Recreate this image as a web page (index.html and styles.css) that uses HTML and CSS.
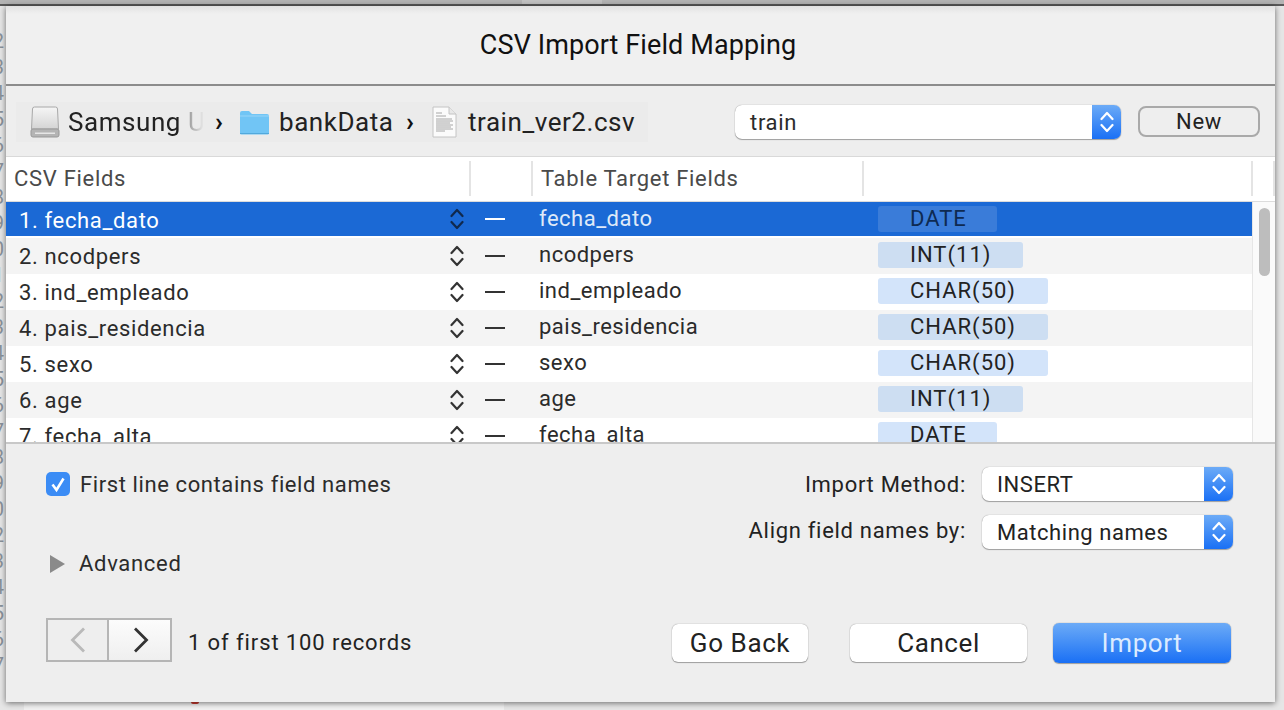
FILE: index.html
```html
<!DOCTYPE html>
<html lang="en">

<head>
    <meta charset="UTF-8">
    <title>CSV Import Field Mapping</title>
    <link rel="stylesheet" href="styles.css">
</head>

<body>
    <svg class="defs" width="0" height="0">
        <symbol id="updown" viewBox="0 0 14 24">
            <path d="M1.5 9 7 3l5.500 6M1.500 15 7 21l5.500-6" fill="none" stroke="currentColor" stroke-width="2.200" stroke-linecap="round" stroke-linejoin="round"/>
        </symbol>
    </svg>

    <div class="backdrop">
        <div class="gutter">
            <span>2</span><span>3</span><span>4</span><span>5</span><span>6</span><span>7</span><span>8</span><span>9</span><span>0</span><span>1</span><span>2</span><span>3</span><span>4</span><span>5</span><span>6</span><span>7</span><span>8</span><span>9</span><span>0</span><span>2</span><span>3</span><span>4</span><span>5</span><span>6</span><span>7</span>
        </div>
        <div class="topbar"><div class="topbar-tab"></div></div>
        <div class="backdrop-bottom"><i class="red-mark"></i></div>
    </div>

    <div class="dialog">
        <h1 class="title">CSV Import Field Mapping</h1>

        <div class="tools">
            <div class="crumbs">
                <svg class="ico-disk" width="30" height="32" viewBox="0 0 30 32">
                    <defs>
                        <linearGradient id="diskTop" x1="0" y1="0" x2="0" y2="1">
                            <stop offset="0" stop-color="#f6f6f6"/>
                            <stop offset="1" stop-color="#d4d4d4"/>
                        </linearGradient>
                    </defs>
                    <path d="M2.500 3a2 2 0 0 1 2-2h21a2 2 0 0 1 2 2l1 20H1.500z" fill="url(#diskTop)" stroke="#a8a8a8"/>
                    <rect x="1" y="23" width="28" height="8" rx="2" fill="#b4b4b4" stroke="#999"/>
                    <rect x="5" y="26.500" width="20" height="1.500" fill="#e6e6e6"/>
                </svg>
                <span class="crumb-disk">Samsung U</span>
                <span class="crumb-sep">›</span>
                <svg class="ico-folder" width="31" height="25" viewBox="0 0 31 25">
                    <path d="M1 3a2 2 0 0 1 2-2h7l3 3h15a2 2 0 0 1 2 2v17a1.500 1.500 0 0 1-1.500 1.500h-26A1.500 1.500 0 0 1 1 23z" fill="#71c5f5"/>
                    <path d="M1 6h29" stroke="#9ad6f8" stroke-width="1"/>
                    <path d="M1 23.500h29" stroke="#52a9dc" stroke-width="1"/>
                </svg>
                <span class="crumb-folder">bankData</span>
                <span class="crumb-sep sep-two">›</span>
                <svg class="ico-file" width="25" height="32" viewBox="0 0 25 32">
                    <path d="M1 1h16l7 7v23H1z" fill="#fbfbfb" stroke="#c4c4c4"/>
                    <path d="M17 1v7h7" fill="#e8e8e8" stroke="#c4c4c4"/>
                    <path d="M4 7h6M4 10h10M4 13h16M4 15h17M4 17h14M4 19h17M4 21h15M4 23h17M4 25h9" stroke="#a6a6a6" stroke-width="1"/>
                </svg>
                <span class="crumb-file">train_ver2.csv</span>
            </div>
            <div class="select select-table">
                <span class="select-text">train</span>
                <span class="stepper"><svg width="14" height="24"><use href="#updown"/></svg></span>
            </div>
            <button class="btn-new">New</button>
        </div>

        <div class="table-head">
            <div class="th th-csv">CSV Fields</div>
            <div class="th th-mid"></div>
            <div class="th th-target">Table Target Fields</div>
            <div class="th th-type"></div>
            <div class="th th-end"></div>
        </div>

        <div class="table-body">
            <div class="rows">
                <div class="row row-selected">
                    <span class="cell-name">1. fecha_dato</span>
                    <svg class="updown" width="14" height="24"><use href="#updown"/></svg>
                    <span class="dash"></span>
                    <span class="cell-target">fecha_dato</span>
                    <span class="chip chip-date">DATE</span>
                </div>
                <div class="row row-alt">
                    <span class="cell-name">2. ncodpers</span>
                    <svg class="updown" width="14" height="24"><use href="#updown"/></svg>
                    <span class="dash"></span>
                    <span class="cell-target">ncodpers</span>
                    <span class="chip chip-int">INT(11)</span>
                </div>
                <div class="row">
                    <span class="cell-name">3. ind_empleado</span>
                    <svg class="updown" width="14" height="24"><use href="#updown"/></svg>
                    <span class="dash"></span>
                    <span class="cell-target">ind_empleado</span>
                    <span class="chip chip-char">CHAR(50)</span>
                </div>
                <div class="row row-alt">
                    <span class="cell-name">4. pais_residencia</span>
                    <svg class="updown" width="14" height="24"><use href="#updown"/></svg>
                    <span class="dash"></span>
                    <span class="cell-target">pais_residencia</span>
                    <span class="chip chip-char">CHAR(50)</span>
                </div>
                <div class="row">
                    <span class="cell-name">5. sexo</span>
                    <svg class="updown" width="14" height="24"><use href="#updown"/></svg>
                    <span class="dash"></span>
                    <span class="cell-target">sexo</span>
                    <span class="chip chip-char">CHAR(50)</span>
                </div>
                <div class="row row-alt">
                    <span class="cell-name">6. age</span>
                    <svg class="updown" width="14" height="24"><use href="#updown"/></svg>
                    <span class="dash"></span>
                    <span class="cell-target">age</span>
                    <span class="chip chip-int">INT(11)</span>
                </div>
                <div class="row">
                    <span class="cell-name">7. fecha_alta</span>
                    <svg class="updown" width="14" height="24"><use href="#updown"/></svg>
                    <span class="dash"></span>
                    <span class="cell-target">fecha_alta</span>
                    <span class="chip chip-date">DATE</span>
                </div>
            </div>
            <div class="scrollbar"><div class="thumb"></div></div>
        </div>

        <div class="panel">
            <div class="options">
                <div class="options-left">
                    <label class="check">
                        <span class="checkbox">
                            <svg width="24" height="24" viewBox="0 0 24 24"><path d="M6.500 12.500 10.500 18 17.500 6.500" fill="none" stroke="#fff" stroke-width="2.600"/></svg>
                        </span>
                        First line contains field names
                    </label>
                    <div class="advanced"><i class="triangle"></i>Advanced</div>
                </div>
                <div class="options-right">
                    <div class="field">
                        <span class="field-label">Import Method:</span>
                        <div class="select select-field">
                            <span class="select-text">INSERT</span>
                            <span class="stepper"><svg width="14" height="24"><use href="#updown"/></svg></span>
                        </div>
                    </div>
                    <div class="field">
                        <span class="field-label label-align">Align field names by:</span>
                        <div class="select select-field">
                            <span class="select-text">Matching names</span>
                            <span class="stepper"><svg width="14" height="24"><use href="#updown"/></svg></span>
                        </div>
                    </div>
                </div>
            </div>

            <div class="footer">
                <div class="pager">
                    <div class="page-btn page-prev">
                        <svg width="16" height="26" viewBox="0 0 16 26"><path d="M14 1.500 2.500 13 14 24.500" fill="none" stroke="#b9b9b9" stroke-width="2.800"/></svg>
                    </div>
                    <div class="page-btn page-next">
                        <svg width="16" height="26" viewBox="0 0 16 26"><path d="M2 1.500 13.500 13 2 24.500" fill="none" stroke="#333" stroke-width="2.800"/></svg>
                    </div>
                </div>
                <span class="records">1 of first 100 records</span>
                <div class="actions">
                    <button class="btn btn-back">Go Back</button>
                    <button class="btn btn-cancel">Cancel</button>
                    <button class="btn btn-import">Import</button>
                </div>
            </div>
        </div>
    </div>
</body>

</html>
```

FILE: styles.css
```css
* {
    box-sizing: border-box;
}

html,
body {
    margin: 0;
    height: 710px;
    overflow: hidden;
}

body {
    font-family: Roboto, "Liberation Sans", sans-serif;
    font-size: 22px;
    letter-spacing: 0.7px;
    color: #2b2b2b;
    background-color: #e6e6e6;
}

.defs {
    position: absolute;
}

/* window behind the dialog */
.backdrop {
    height: 710px;
    position: relative;
    display: flex;
    flex-direction: column;
}

.topbar {
    height: 6px;
    background-color: #b4b4b4;
    border-bottom: 2px solid #5a5a5a;
    flex: none;
    order: -1;
}

.topbar-tab {
    width: 80px;
    height: 4px;
    margin-left: 522px;
    background-color: #c2c2c2;
}

.gutter {
    position: absolute;
    left: 0;
    top: 28px;
    width: 4px;
    height: 682px;
    overflow: hidden;
    display: flex;
    flex-direction: column;
    align-items: flex-end;
    font-size: 20px;
    line-height: 26px;
    letter-spacing: 0;
    color: #8b929a;
}

.backdrop-bottom {
    margin-top: auto;
    height: 8px;
    margin-left: 24px;
    width: 480px;
    background-color: #f1f1f1;
    position: relative;
}

.red-mark {
    position: absolute;
    left: 167px;
    top: 0;
    width: 8px;
    height: 2px;
    border-radius: 0 0 4px 4px;
    background-color: #c9392f;
}

/* dialog */
.dialog {
    position: absolute;
    left: 6px;
    top: 6px;
    width: 1269px;
    height: 696px;
    display: flex;
    flex-direction: column;
    background-color: #eeeeee;
    box-shadow: 0 1px 6px rgba(0, 0, 0, 0.55);
}

.title {
    height: 80px;
    margin: 0;
    padding-right: 5px;
    flex: none;
    display: flex;
    align-items: center;
    justify-content: center;
    font-size: 27px;
    font-weight: 400;
    letter-spacing: 0.1px;
    color: #111;
    background: linear-gradient(#e2e2e2, #f0f0f0 8px);
    border-bottom: 2px solid #8c8c8c;
}

.tools {
    height: 71px;
    flex: none;
    display: flex;
    align-items: center;
    padding-top: 2px;
    border-bottom: 1px solid #d9d9d9;
}

.crumbs {
    width: 632px;
    height: 40px;
    margin-left: 10px;
    padding-left: 14px;
    display: flex;
    align-items: center;
    background-color: #ebebeb;
    font-size: 26px;
    letter-spacing: 0.55px;
    color: #222;
    flex: none;
}

.ico-disk {
    margin-right: 8px;
    flex: none;
}

.crumb-disk {
    width: 136px;
    overflow: hidden;
    white-space: nowrap;
    -webkit-mask-image: linear-gradient(90deg, #000 112px, rgba(0, 0, 0, 0.35) 122px, transparent 136px);
    mask-image: linear-gradient(90deg, #000 112px, rgba(0, 0, 0, 0.35) 122px, transparent 136px);
}

.crumb-sep {
    width: 35px;
    flex: none;
    padding-left: 11px;
    font-weight: 700;
    color: #111;
}

.sep-two {
    width: 39px;
    padding-left: 13px;
}

.ico-folder {
    margin-right: 9px;
    flex: none;
}

.crumb-folder {
    width: 114px;
    flex: none;
}

.ico-file {
    margin-right: 11px;
    flex: none;
}

.select {
    display: flex;
    align-items: center;
    background-color: #fff;
    border-radius: 7px;
    box-shadow: 0 0 1px rgba(0, 0, 0, 0.45), 0 1px 1px rgba(0, 0, 0, 0.3);
    overflow: hidden;
    flex: none;
}

.select-table {
    width: 386px;
    height: 34px;
    margin-left: 87px;
}

.select-text {
    flex: 1;
    padding-left: 15px;
}

.select-field .select-text {
    letter-spacing: 0.55px;
}

.stepper {
    width: 29px;
    height: 100%;
    display: flex;
    align-items: center;
    justify-content: center;
    color: #fff;
    background: linear-gradient(#6cabf7, #1a70f5);
}

.btn-new {
    width: 122px;
    height: 31px;
    margin-left: 17px;
    margin-top: -2px;
    padding: 0;
    font: inherit;
    letter-spacing: inherit;
    color: #222;
    background: transparent;
    border: 2px solid #a9a9a9;
    border-radius: 8px;
}

/* table */
.table-head {
    height: 45px;
    flex: none;
    display: flex;
    background-color: #fff;
    border-bottom: 1px solid #dcdcdc;
    padding-top: 4px;
    color: #4a4a4a;
}

.th {
    height: 35px;
    border-right: 2px solid #e4e4e4;
    display: flex;
    align-items: center;
    flex: none;
}

.th-csv {
    width: 465px;
    padding-left: 8px;
}

.th-mid {
    width: 62px;
}

.th-target {
    width: 331px;
    padding-left: 8px;
}

.th-type {
    width: 389px;
}

.th-end {
    width: 22px;
}

.table-body {
    height: 240px;
    flex: none;
    display: flex;
    overflow: hidden;
    background-color: #fff;
}

.rows {
    width: 1246px;
    flex: none;
}

.row {
    height: 36px;
    display: grid;
    grid-template-columns: 444px 35px 54px 339px 1fr;
    align-items: center;
    background-color: #fff;
}

.row-alt {
    background-color: #f4f4f4;
}

.row-selected {
    background-color: #1b69d5;
    background-clip: padding-box;
    border-bottom: 2px solid #fff;
    height: 36px;
    color: #fff;
}

.cell-name {
    padding-left: 13px;
    letter-spacing: 0.65px;
    white-space: nowrap;
}

.row-selected .cell-name {
    padding-top: 2px;
}

.cell-target {
    padding-bottom: 4px;
    letter-spacing: 0.5px;
    white-space: nowrap;
}

.row-selected .cell-target {
    padding-bottom: 2px;
    color: #dfe9f8;
}

.updown {
    color: #333;
}

.row-selected .updown {
    color: #10294d;
}

.dash {
    width: 20px;
    height: 2px;
    background-color: #333;
}

.row-selected .dash {
    background-color: #fff;
}

.chip {
    height: 26px;
    align-self: start;
    margin-top: 4px;
    padding-left: 32px;
    line-height: 25px;
    letter-spacing: 1px;
    border-radius: 3px;
    background-color: #d3e4fa;
    color: #222;
}

.row-alt .chip {
    background-color: #cddef2;
}

.chip-date {
    width: 119px;
}

.chip-int {
    width: 145px;
}

.chip-char {
    width: 170px;
}

.row-selected .chip {
    background-color: #3a7cd9;
    color: #0e2a52;
}

.scrollbar {
    width: 23px;
    flex: none;
    padding: 6px 5px 0 6px;
    background-color: #fafafa;
    border-left: 1px solid #e6e6e6;
}

.thumb {
    height: 68px;
    border-radius: 6px;
    background-color: #bdbdbd;
}

/* bottom panel */
.panel {
    flex: 1;
    border-top: 2px solid #c8c8c8;
    display: flex;
    flex-direction: column;
    padding: 21px 42px 0 40px;
}

.options {
    height: 153px;
    flex: none;
    display: flex;
    justify-content: space-between;
}

.check {
    height: 38px;
    display: flex;
    align-items: center;
    gap: 10px;
    letter-spacing: 0.6px;
}

.checkbox {
    width: 24px;
    height: 24px;
    border-radius: 5px;
    background-color: #3b8cf5;
}

.checkbox svg {
    display: block;
}

.advanced {
    margin-top: 48px;
    display: flex;
    align-items: center;
    gap: 14px;
    padding-left: 4px;
}

.triangle {
    width: 0;
    height: 0;
    border-left: 15px solid #8a8a8a;
    border-top: 9px solid transparent;
    border-bottom: 9px solid transparent;
}

.options-right {
    display: flex;
    flex-direction: column;
    gap: 14px;
    align-items: flex-end;
    margin-top: 2px;
}

.field {
    display: flex;
    align-items: center;
    gap: 16px;
    color: #222;
}

.label-align {
    padding-bottom: 4px;
}

.select-field {
    width: 251px;
    height: 34px;
}

.footer {
    display: flex;
    align-items: center;
    height: 44px;
}

.pager {
    display: flex;
    flex: none;
}

.page-btn {
    width: 63px;
    height: 44px;
    display: flex;
    align-items: center;
    justify-content: center;
    border: 2px solid #b5b5b5;
}

.page-next {
    margin-left: -2px;
    width: 65px;
    padding-left: 3px;
    background: linear-gradient(#fcfcfc, #efefef);
}

.records {
    margin-left: 16px;
    padding-top: 4px;
    letter-spacing: 0.9px;
    color: #222;
}

.actions {
    margin-left: auto;
    margin-right: 2px;
    padding-top: 5px;
    display: flex;
    align-items: center;
}

.btn {
    height: 38px;
    padding: 0;
    font: inherit;
    font-size: 26px;
    letter-spacing: 0.6px;
    color: #222;
    background-color: #fff;
    border: none;
    border-radius: 6px;
    box-shadow: 0 0 1px rgba(0, 0, 0, 0.5), 0 1px 1px rgba(0, 0, 0, 0.3);
}

.btn-back {
    width: 136px;
}

.btn-cancel {
    width: 177px;
    margin-left: 42px;
}

.btn-import {
    width: 178px;
    height: 40px;
    margin-left: 26px;
    color: #dcebff;
    background: linear-gradient(#6cabf7, #1a70f5);
}
```
